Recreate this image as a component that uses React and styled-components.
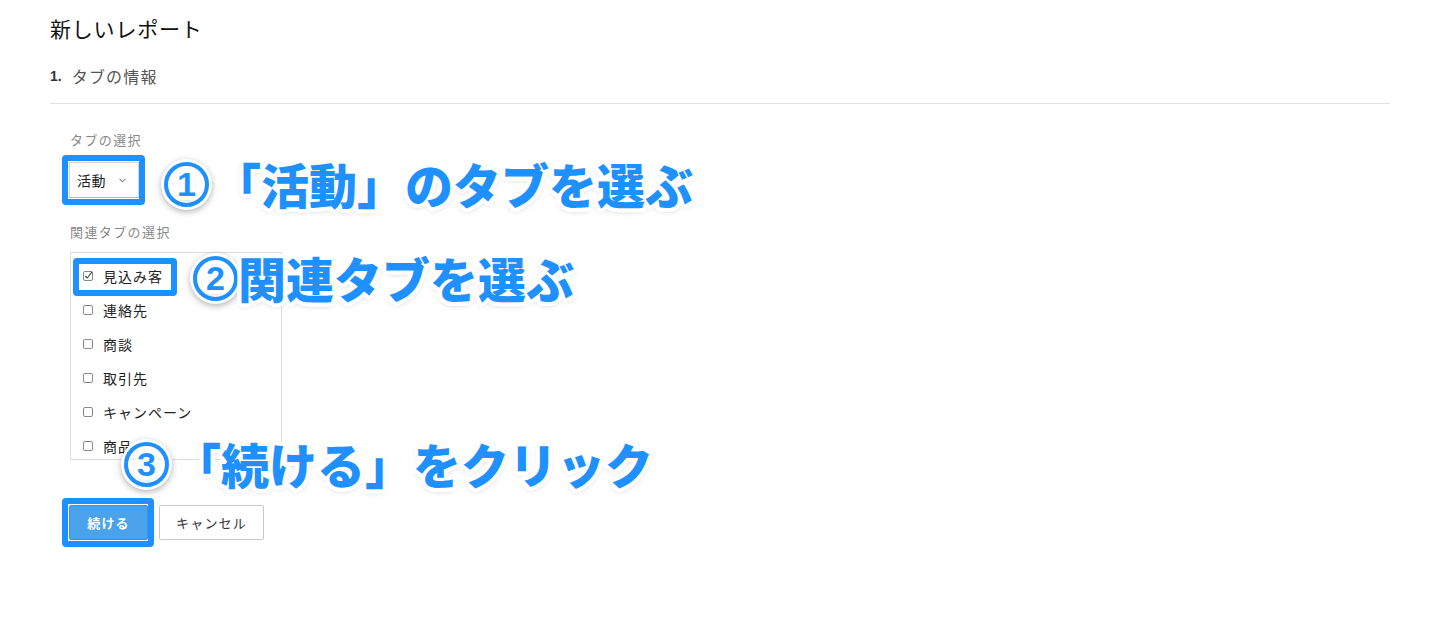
import React from "react";
import styled, { createGlobalStyle, css } from "styled-components";
import { ChevronDown } from "lucide-react";

const relatedTabs = ["見込み客", "連絡先", "商談", "取引先", "キャンペーン", "商品"];

const callouts = [
  { step: 1, text: "「活動」のタブを選ぶ", left: 163, top: 159, gap: 4 },
  { step: 2, text: "関連タブを選ぶ", left: 192, top: 253, gap: 0 },
  { step: 3, text: "「続ける」をクリック", left: 123, top: 439, gap: 4 },
];

// white outline round the callout text, built from offset shadows
const outline = (() => {
  const parts = [];
  const r = 4;
  for (let i = 0; i < 24; i++) {
    const a = (i / 24) * Math.PI * 2;
    parts.push(`${(Math.cos(a) * r).toFixed(2)}px ${(Math.sin(a) * r).toFixed(2)}px 0 #fff`);
  }
  parts.push("0 2px 6px rgba(0,0,0,0.35)");
  return parts.join(", ");
})();

function App() {
  return (
    <Page>
      <GlobalStyle />
      <Title>新しいレポート</Title>
      <StepHeading>
        <StepNumber>1.</StepNumber>タブの情報
      </StepHeading>
      <Divider />
      <Form>
        <FieldLabel>タブの選択</FieldLabel>
        <Highlighted>
          <SelectBox>
            活動
            <ChevronDown size={11} strokeWidth={2} />
          </SelectBox>
        </Highlighted>
        <FieldLabel $gap={25}>関連タブの選択</FieldLabel>
        <TabList>
          {relatedTabs.map((name, i) => (
            <TabRow key={name} $marked={i === 0}>
              <Checkbox checked={i === 0} />
              {name}
            </TabRow>
          ))}
        </TabList>
        <Actions>
          <Highlighted $wide>
            <PrimaryButton>続ける</PrimaryButton>
          </Highlighted>
          <SecondaryButton>キャンセル</SecondaryButton>
        </Actions>
      </Form>
      {callouts.map((c) => (
        <Callout key={c.step} style={{ left: c.left, top: c.top }}>
          <Circled $gap={c.gap}>{c.step}</Circled>
          {c.text}
        </Callout>
      ))}
    </Page>
  );
}

function Checkbox({ checked }) {
  return (
    <svg width="10" height="10" viewBox="0 0 10 10" style={{ overflow: "visible" }}>
      <rect x="0.5" y="0.5" width="9" height="9" rx="1.5" fill="#fff" stroke="#8a8a8a" />
      {checked && (
        <polyline points="2.3,5 4.2,7 9.2,0.6" fill="none" stroke="#444" strokeWidth="1.1" />
      )}
    </svg>
  );
}

export default App;

const GlobalStyle = createGlobalStyle`
  body {
    margin: 0;
    background: #fff;
    font-family: "Noto Sans CJK JP", "Liberation Sans", sans-serif;
    color: #222;
  }
`;

const Page = styled.div`
  position: relative;
  height: 625px;
  overflow: hidden;
  padding: 14px 50px 0;
  box-sizing: border-box;
`;

const Title = styled.div`
  height: 28px;
  font-size: 21px;
  line-height: 28px;
  letter-spacing: 0.8px;
  color: #111;
`;

const StepHeading = styled.div`
  height: 24px;
  display: flex;
  align-items: center;
  margin-top: 22px;
  font-size: 16px;
  letter-spacing: 1.2px;
  color: #555;
`;

const StepNumber = styled.span`
  font-family: "Liberation Sans", sans-serif;
  font-weight: 700;
  color: #333;
  font-size: 14px;
  letter-spacing: 0;
  margin-right: 10px;
`;

const Divider = styled.div`
  margin-top: 15px;
  height: 1px;
  background: #e2e2e2;
`;

const Form = styled.div`
  padding-left: 20px;
`;

const FieldLabel = styled.div`
  height: 18px;
  margin-top: ${({ $gap }) => $gap || 27}px;
  font-size: 13px;
  line-height: 18px;
  letter-spacing: 1.4px;
  color: #888;
`;

const highlightRing = css`
  content: "";
  position: absolute;
  border: 6px solid #1e90ff;
  border-radius: 4px;
  pointer-events: none;
`;

const Highlighted = styled.div`
  position: relative;
  display: inline-flex;
  vertical-align: top;
  margin-top: ${({ $wide }) => ($wide ? 0 : 13)}px;
  margin-left: -1px;
  &::after {
    ${highlightRing};
    inset: -7px -6px -7px -7px;
  }
`;

const SelectBox = styled.div`
  width: 70px;
  height: 36px;
  box-sizing: border-box;
  display: flex;
  align-items: center;
  justify-content: space-between;
  padding: 0 10px 0 7px;
  border: 1px solid #d4d4d4;
  border-bottom-color: #b8b8b8;
  font-size: 14px;
  letter-spacing: 0.5px;
  color: #222;
  background: #fff;
  svg {
    color: #444;
  }
`;

const TabList = styled.div`
  margin-top: 11px;
  width: 212px;
  height: 208px;
  box-sizing: border-box;
  border: 1px solid #dedede;
  padding-top: 6px;
  overflow: hidden;
`;

const TabRow = styled.div`
  position: relative;
  height: 34px;
  display: flex;
  align-items: center;
  gap: 10px;
  padding-left: 12px;
  font-size: 14px;
  letter-spacing: 1px;
  color: #222;
  ${({ $marked }) =>
    $marked &&
    css`
      &::after {
        ${highlightRing};
        left: 2px;
        top: -1px;
        width: 104px;
        height: 38px;
        box-sizing: border-box;
      }
    `}
`;

const Actions = styled.div`
  margin-top: 45px;
  display: flex;
  align-items: center;
  gap: 11px;
`;

const BaseButton = styled.button`
  height: 35px;
  box-sizing: border-box;
  font-family: "Noto Sans CJK JP", "Liberation Sans", sans-serif;
  font-size: 13px;
  letter-spacing: 1.2px;
  border-radius: 2px;
  cursor: pointer;
`;

const PrimaryButton = styled(BaseButton)`
  width: 79px;
  margin: 0;
  background: #4aa3ea;
  border: 1px solid #3b92de;
  color: #fff;
  font-weight: 700;
`;

const SecondaryButton = styled(BaseButton)`
  width: 105px;
  background: #fff;
  border: 1px solid #c9c9c9;
  color: #333;
`;

const Callout = styled.div`
  position: absolute;
  display: flex;
  align-items: center;
  font-size: 48px;
  line-height: 48px;
  font-weight: 900;
  color: #1e90ff;
  white-space: nowrap;
  text-shadow: ${outline};
`;

const Circled = styled.span`
  flex: none;
  width: 45px;
  height: 45px;
  box-sizing: border-box;
  margin: 2px ${({ $gap }) => $gap}px 0 1px;
  border: 4px solid #1e90ff;
  border-radius: 50%;
  display: flex;
  align-items: center;
  justify-content: center;
  font-family: "Liberation Sans", sans-serif;
  font-size: 34px;
  line-height: 1;
  font-weight: 700;
  box-shadow: 0 0 0 3px #fff, inset 0 0 0 3px #fff, 0 2px 6px 3px rgba(0, 0, 0, 0.3);
`;
